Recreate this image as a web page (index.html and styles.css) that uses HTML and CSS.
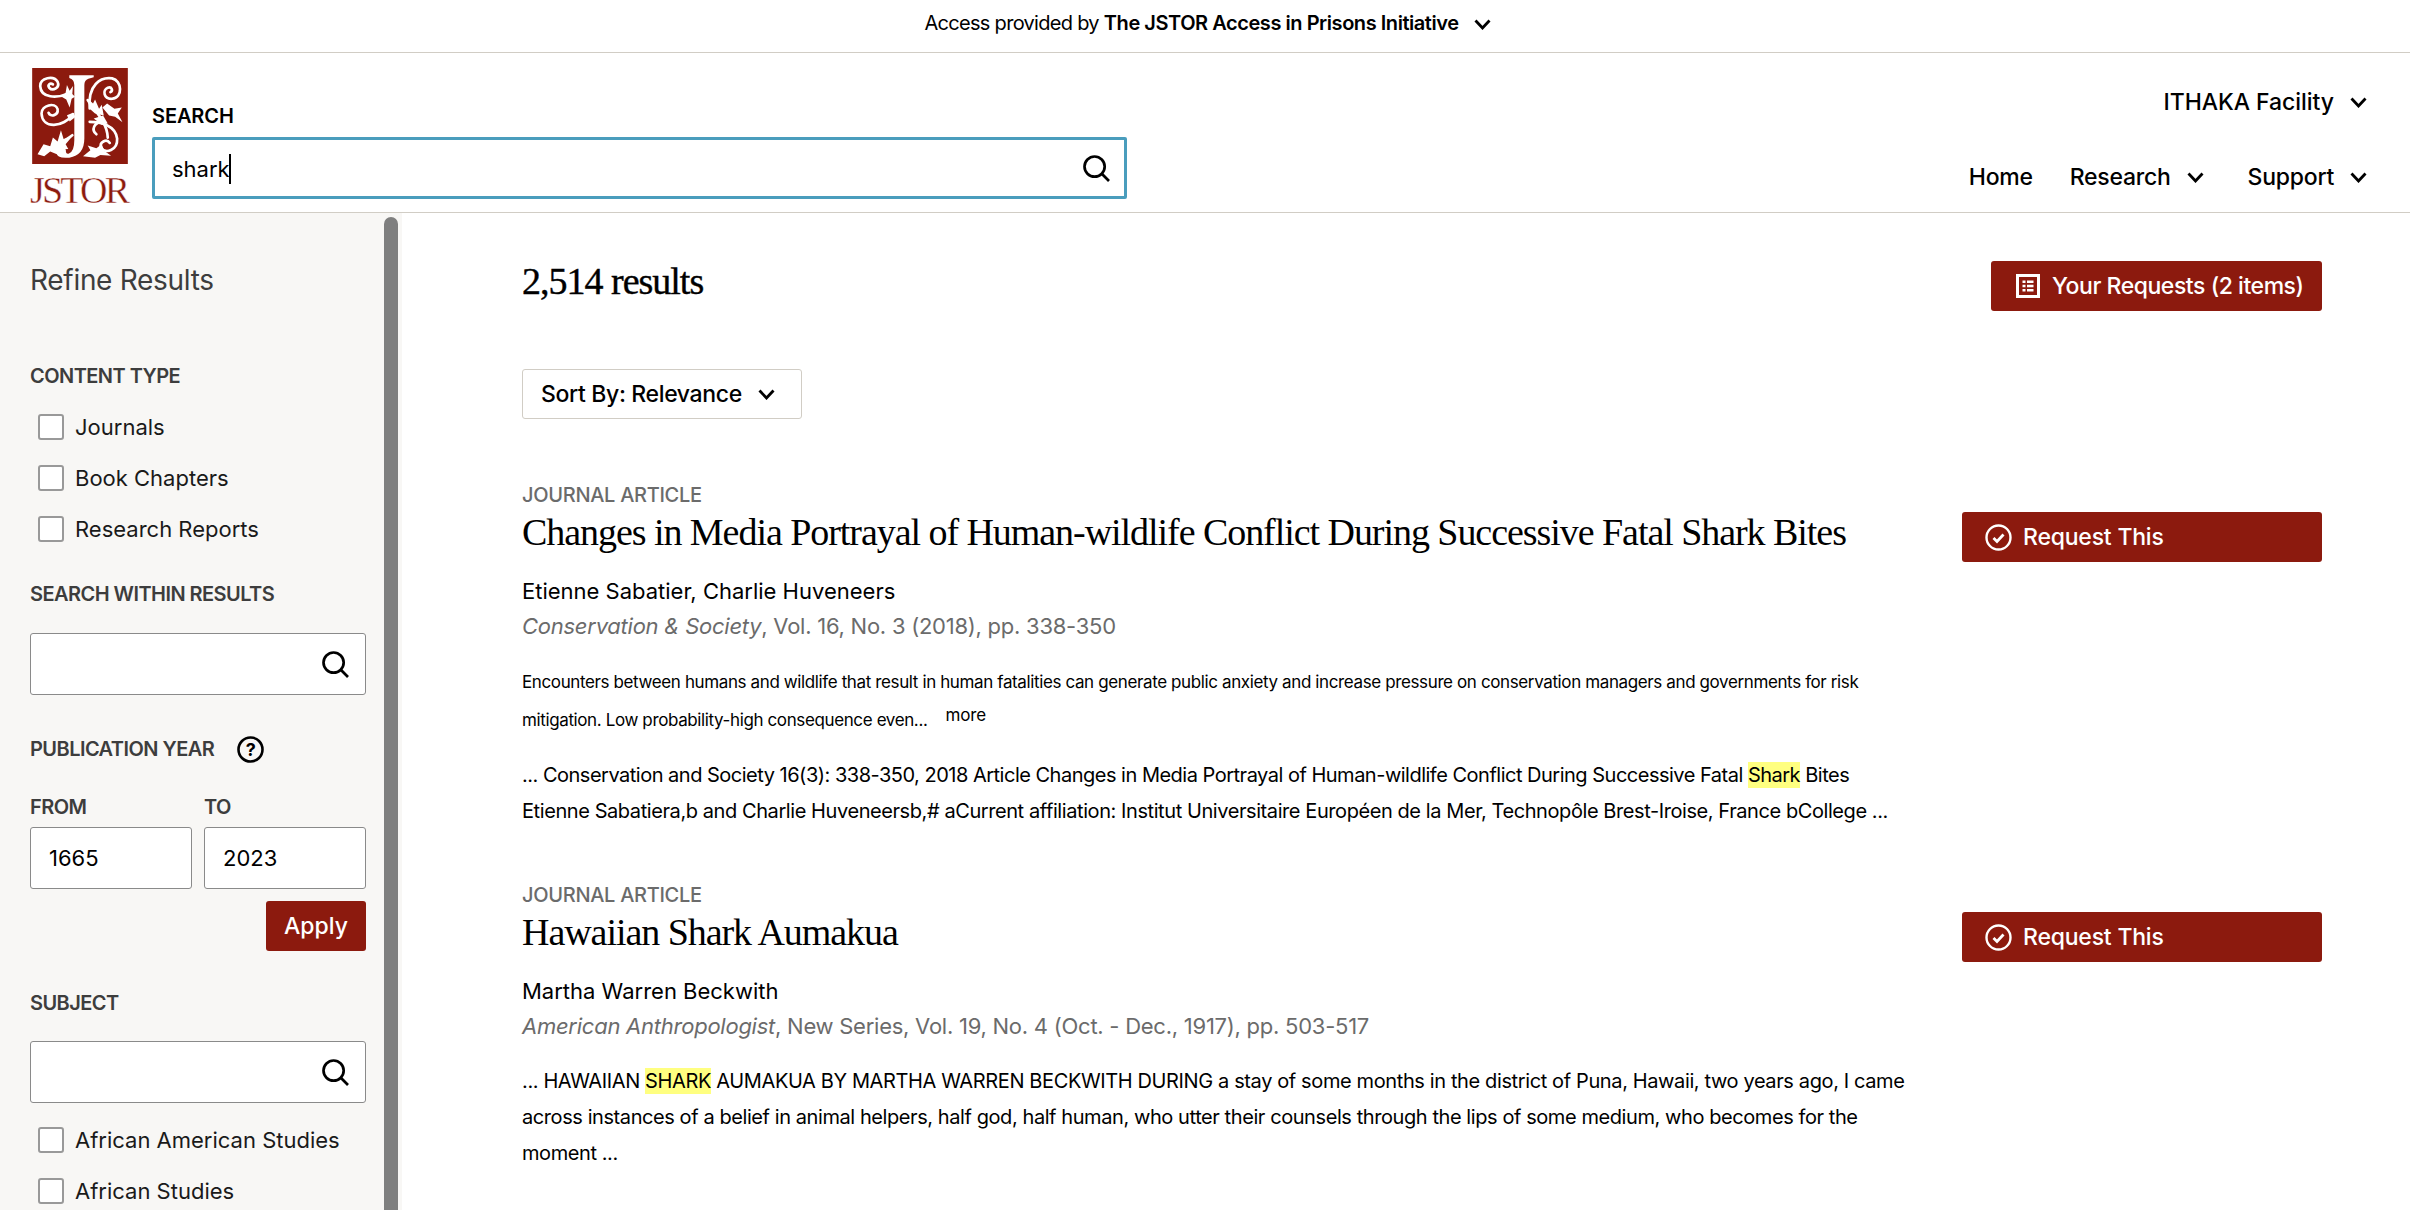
FILE: index.html
```html
<!DOCTYPE html>
<html lang="en">
<head>
<meta charset="utf-8">
<title>JSTOR search results</title>
<link rel="stylesheet" href="styles.css">
</head>
<body>
<svg class="defs" width="0" height="0" aria-hidden="true">
  <symbol id="chev" viewBox="0 0 17 11"><path d="M1.5 1.5 8.5 9 15.5 1.5" fill="none" stroke="currentColor" stroke-width="2.8"/></symbol>
  <symbol id="search" viewBox="0 0 27 27"><circle cx="11.6" cy="11.6" r="10.1" fill="none" stroke="currentColor" stroke-width="2.7"/><path d="M18.8 18.8 26 26" fill="none" stroke="currentColor" stroke-width="2.7"/></symbol>
  <symbol id="check" viewBox="0 0 27 27"><circle cx="13.5" cy="13.5" r="12" fill="none" stroke="#fff" stroke-width="2.4"/><path d="M8.5 14 12 17.5 18.5 10.5" fill="none" stroke="#fff" stroke-width="2.8"/></symbol>
</svg>

<div class="topbar">
  <span class="access">Access provided by <b>The JSTOR Access in Prisons Initiative</b></span>
  <svg class="chev topchev"><use href="#chev"/></svg>
</div>

<header class="header">
  <a class="logo">
    <svg class="logomark" width="96" height="96" viewBox="96 54 286 287" aria-hidden="true">
      <rect x="96" y="54" width="286" height="287" fill="#8c1a0e"/>
      <g fill="none" stroke="#fff" stroke-width="8" stroke-linecap="round">
        <path d="M205 130C170 145 122 145 120 108 120 82 160 76 172 95 180 112 158 125 147 113 141 105 150 97 158 103"/>
        <path d="M218 192C190 232 126 238 124 190 124 165 165 155 172 177 175 196 150 202 145 188"/>
        <path d="M268 175C262 105 300 80 335 85 365 92 368 142 335 146 310 148 305 120 322 113 335 109 338 122 330 126"/>
        <path d="M268 215C300 215 345 225 350 265 352 300 315 312 302 292 296 276 318 264 328 278"/>
        <path d="M262 150C285 185 320 215 322 262"/>
        <path d="M308 215C280 215 272 240 288 252"/>
        <path d="M216 255C190 275 165 285 140 300"/>
      </g>
      <g fill="#fff">
        <path d="M207 76H280V82L264 86Q252 90 252 105V265Q252 315 207 322 170 326 168 305 168 290 185 290 198 292 197 305 198 312 205 310 222 305 222 270V105Q222 88 207 84Z"/>
        <path d="M196 128 200 105 208 122 218 108 216 132 224 140 214 146 208 172 198 148 184 140Z"/>
        <path d="M200 195 218 188 226 200 208 214Z"/>
        <path d="M112 312 130 282 150 288 158 262 172 274 182 240 190 266 216 258 196 282 204 296 180 298 170 312 150 304 132 318Z"/>
        <path d="M320 160 342 176 364 172 352 190 366 216 344 200 326 196 306 172Z"/>
        <path d="M262 146 278 160 284 148 296 176 304 164 310 196 284 190 268 176Z"/>
        <path d="M248 318 270 300 262 286 288 294 304 282 312 302 332 316 300 314 284 322Z"/>
        <path d="M280 205 308 196 322 220 304 224Z"/>
      </g>
    </svg>
    <span class="wordmark">JSTOR</span>
  </a>
  <div class="searchblock">
    <label class="searchlabel">SEARCH</label>
    <div class="searchbox">
      <span class="query">shark</span><span class="caret"></span>
      <svg class="icon27 push"><use href="#search"/></svg>
    </div>
  </div>
  <div class="headright">
    <div class="account">ITHAKA Facility<svg class="chev"><use href="#chev"/></svg></div>
    <nav class="nav">
      <a>Home</a>
      <a>Research<svg class="chev"><use href="#chev"/></svg></a>
      <a>Support<svg class="chev"><use href="#chev"/></svg></a>
    </nav>
  </div>
</header>

<div class="page">
  <aside class="sidebar">
    <h2 class="refine">Refine Results</h2>

    <h3 class="flabel ctype">CONTENT TYPE</h3>
    <ul class="checks first">
      <li><span class="box"></span>Journals</li>
      <li><span class="box"></span>Book Chapters</li>
      <li><span class="box"></span>Research Reports</li>
    </ul>

    <h3 class="flabel within">SEARCH WITHIN RESULTS</h3>
    <div class="sbox"><svg class="icon27"><use href="#search"/></svg></div>

    <h3 class="flabel pubyear">PUBLICATION YEAR
      <svg class="help" viewBox="0 0 27 27"><circle cx="13.5" cy="13.5" r="12" fill="none" stroke="#000" stroke-width="2.6"/><text x="13.5" y="19.5" text-anchor="middle" class="helpq">?</text></svg>
    </h3>
    <div class="years">
      <div class="year"><span class="flabel">FROM</span><div class="ybox">1665</div></div>
      <div class="year"><span class="flabel">TO</span><div class="ybox">2023</div></div>
    </div>
    <div class="applyrow"><button class="apply">Apply</button></div>

    <h3 class="flabel subject">SUBJECT</h3>
    <div class="sbox subject-box"><svg class="icon27"><use href="#search"/></svg></div>
    <ul class="checks second">
      <li><span class="box"></span>African American Studies</li>
      <li><span class="box"></span>African Studies</li>
    </ul>
  </aside>

  <main class="main">
    <div class="toprow">
      <h1 class="count">2,514 results</h1>
      <button class="requests">
        <svg class="listicon" viewBox="0 0 24 24"><rect x="1.5" y="1.5" width="21" height="21" fill="none" stroke="#fff" stroke-width="3"/><path d="M6.5 6.5h3v2.6h-3zM11 6.5h6.5v2.6H11zM6.5 10.7h3v2.6h-3zM11 10.7h6.5v2.6H11zM6.5 14.9h3v2.6h-3zM11 14.9h6.5v2.6H11z" fill="#fff"/></svg>
        Your Requests (2 items)
      </button>
    </div>

    <div class="sort">Sort By: Relevance<svg class="chev"><use href="#chev"/></svg></div>

    <article class="result r1">
      <div class="rbody">
        <div class="rtype">JOURNAL ARTICLE</div>
        <h2 class="rtitle">Changes in Media Portrayal of Human-wildlife Conflict During Successive Fatal Shark Bites</h2>
        <div class="rauthor">Etienne Sabatier, Charlie Huveneers</div>
        <div class="rsource"><i>Conservation &amp; Society</i>, Vol. 16, No. 3 (2018), pp. 338-350</div>
        <p class="abstract">Encounters between humans and wildlife that result in human fatalities can generate public anxiety and increase pressure on conservation managers and governments for risk<br>mitigation. Low probability-high consequence even...<a class="more">more</a></p>
        <p class="snippet"><span class="tight">... Conservation and Society 16(3): 338-350, 2018 Article Changes in Media Portrayal of Human-wildlife Conflict During Successive Fatal <mark>Shark</mark> Bites</span><br>Etienne Sabatiera,b and Charlie Huveneersb,# aCurrent affiliation: Institut Universitaire Européen de la Mer, Technopôle Brest-Iroise, France bCollege ...</p>
      </div>
      <button class="reqthis"><svg class="icon27"><use href="#check"/></svg>Request This</button>
    </article>

    <article class="result r2">
      <div class="rbody">
        <div class="rtype">JOURNAL ARTICLE</div>
        <h2 class="rtitle">Hawaiian Shark Aumakua</h2>
        <div class="rauthor">Martha Warren Beckwith</div>
        <div class="rsource"><i>American Anthropologist</i>, New Series, Vol. 19, No. 4 (Oct. - Dec., 1917), pp. 503-517</div>
        <p class="snippet"><span class="loose">... HAWAIIAN <mark>SHARK</mark> AUMAKUA BY MARTHA WARREN BECKWITH DURING a stay of some months in the district of Puna, Hawaii, two years ago, I came</span><br>across instances of a belief in animal helpers, half god, half human, who utter their counsels through the lips of some medium, who becomes for the<br>moment ...</p>
      </div>
      <button class="reqthis"><svg class="icon27"><use href="#check"/></svg>Request This</button>
    </article>
  </main>
</div>
</body>
</html>
```
FILE: styles.css
```css
* { box-sizing: border-box; }
html, body { margin: 0; padding: 0; }
body {
  width: 2410px; height: 1210px; overflow: hidden; background: #fff; color: #000;
  font-family: Inter, "Liberation Sans", sans-serif; font-size: 22px;
}
h1, h2, h3, p, ul { margin: 0; padding: 0; font-weight: normal; }
ul { list-style: none; }
button { font-family: inherit; border: 0; cursor: pointer; }
.defs { position: absolute; }
.chev { width: 17px; height: 11px; flex: none; display: block; }

.topbar {
  height: 53px; border-bottom: 1px solid #d1cdc5;
  display: flex; align-items: center; justify-content: center; padding: 0 0 6px 5px;
  font-size: 20px; letter-spacing: -0.7px;
}
.access b { font-weight: 600; letter-spacing: -0.45px; }
.topchev { margin-left: 15px; margin-top: 2px; }

.header {
  height: 160px; border-bottom: 1px solid #d1cdc5;
  display: flex; padding: 15px 43px 0 30px;
}
.logo { width: 98px; flex: none; display: flex; flex-direction: column; }
.logomark { display: block; margin-left: 2px; flex: none; }
.wordmark {
  margin-top: 6px; line-height: 40px; white-space: nowrap;
  font-family: "Liberation Serif", serif; font-size: 38px; letter-spacing: -2.8px;
  color: #8c1a0e; -webkit-text-stroke: 0.4px #fff;
}
.searchblock { margin-left: 24px; width: 975px; padding-top: 36px; }
.searchlabel { display: block; line-height: 24px; font-size: 20px; font-weight: 600; letter-spacing: -0.1px; }
.searchbox {
  margin-top: 9px; height: 62px; border: 3px solid #4a9dbd; border-radius: 2px; background: #fff;
  display: flex; align-items: center; padding: 1px 14px 0 17px;
  font-size: 22px;
}
.caret { width: 2px; height: 30px; background: #000; margin-left: -1px; }
.icon27 { width: 27px; height: 27px; flex: none; display: block; }
.push { margin-left: auto; }
.headright { margin-left: auto; display: flex; flex-direction: column; align-items: flex-end; font-size: 23px; font-weight: 500; letter-spacing: -0.25px; }
.account { display: flex; align-items: center; gap: 16px; margin-top: 20px; line-height: 28px; letter-spacing: -0.05px; }
.nav { display: flex; margin-top: 47px; line-height: 28px; gap: 37px; }
.nav a { display: flex; align-items: center; gap: 16px; }
.nav a + a + a { margin-left: 7px; }

.page { display: flex; height: 997px; }
.sidebar {
  width: 402px; flex: none; background: #f8f7f5; padding: 0 36px 0 30px; position: relative; overflow: hidden;
}
.sidebar::after {
  content: ""; position: absolute; left: 384px; top: 4px; bottom: -20px; width: 14px;
  background: #7f7f7f; border-radius: 7px;
}
.refine { margin-top: 50px; line-height: 34px; font-size: 28px; color: #3d3d3d; letter-spacing: -0.3px; }
.flabel { display: block; line-height: 24px; font-size: 20px; font-weight: 600; color: #3d3d3d; letter-spacing: -0.55px; }
.ctype { margin-top: 67px; }
.checks li { height: 51px; display: flex; align-items: center; padding-left: 8px; font-size: 22px; color: #1a1a1a; }
.first { margin-top: 13px; }
.box { width: 26px; height: 26px; border: 2px solid #999; border-radius: 3px; background: #fff; margin-right: 11px; flex: none; }
.within { margin-top: 28px; }
.sbox {
  margin-top: 27px; height: 62px; border: 1px solid #8a8a8a; border-radius: 3px; background: #fff;
  display: flex; align-items: center; justify-content: flex-end; padding-right: 16px;
}
.subject-box { margin-top: 26px; }
.pubyear { margin-top: 42px; height: 24px; display: flex; align-items: center; gap: 23px; }
.help { width: 27px; height: 27px; flex: none; }
.helpq { font-family: Inter, sans-serif; font-size: 18px; font-weight: 700; fill: #000; }
.years { margin-top: 34px; display: flex; gap: 12px; }
.year { width: 162px; }
.ybox {
  margin-top: 8px; height: 62px; border: 1px solid #8a8a8a; border-radius: 3px; background: #fff;
  display: flex; align-items: center; padding-left: 18px; font-size: 22px;
}
.applyrow { margin-top: 12px; display: flex; justify-content: flex-end; }
.apply { width: 100px; height: 50px; background: #8c1a0e; color: #fff; border-radius: 3px; font-size: 23px; font-weight: 500; }
.subject { margin-top: 40px; }
.second { margin-top: 11px; }

.main { flex: 1; padding: 48px 88px 0 120px; min-width: 0; }
.toprow { display: flex; justify-content: space-between; align-items: flex-start; height: 50px; }
.count { font-family: "Liberation Serif", serif; font-size: 38px; line-height: 40px; letter-spacing: -1px; -webkit-text-stroke: 0.4px #000; }
.requests {
  width: 331px; height: 50px; background: #8c1a0e; color: #fff; border-radius: 3px;
  display: flex; align-items: center; gap: 12px; padding: 0 0 0 25px; font-size: 23px; font-weight: 500; letter-spacing: -0.45px;
}
.listicon { width: 24px; height: 24px; flex: none; }
.sort {
  margin-top: 58px; width: 280px; height: 50px; border: 1px solid #d1cdc5; border-radius: 3px;
  display: flex; align-items: center; gap: 16px; padding-left: 18px; font-size: 23px; font-weight: 500; letter-spacing: -0.35px;
}
.result { display: flex; justify-content: space-between; align-items: flex-start; }
.r1 { margin-top: 63px; }
.r2 { margin-top: 53px; }
.rbody { width: 1400px; flex: none; }
.rtype { margin-top: 1px; line-height: 24px; font-size: 20px; font-weight: 500; color: #6b6b6b; letter-spacing: -0.3px; }
.rtitle { margin-top: 3px; line-height: 44px; font-family: "Liberation Serif", serif; font-size: 38px; letter-spacing: -1.05px; white-space: nowrap; }
.rauthor { margin-top: 22px; line-height: 30px; font-size: 22px; }
.rsource { margin-top: 5px; line-height: 30px; font-size: 22px; color: #6b6b6b; letter-spacing: -0.25px; }
.abstract { margin-top: 22px; line-height: 38px; font-size: 17px; white-space: nowrap; letter-spacing: -0.38px; }
.more { margin-left: 18px; position: relative; top: -5px; letter-spacing: -0.15px; }
.snippet { margin-top: 18px; line-height: 36px; font-size: 20px; white-space: nowrap; letter-spacing: -0.42px; }
.r2 .snippet { margin-top: 22px; }
.tight { letter-spacing: -0.5px; }
.loose { letter-spacing: -0.38px; }
mark { background: #ffff80; color: inherit; padding: 1px 0; }
.reqthis {
  width: 360px; height: 50px; margin-top: 30px; background: #8c1a0e; color: #fff; border-radius: 3px;
  display: flex; align-items: center; gap: 11px; padding: 0 0 0 23px; font-size: 23px; font-weight: 500; letter-spacing: -0.2px; flex: none;
}
```
